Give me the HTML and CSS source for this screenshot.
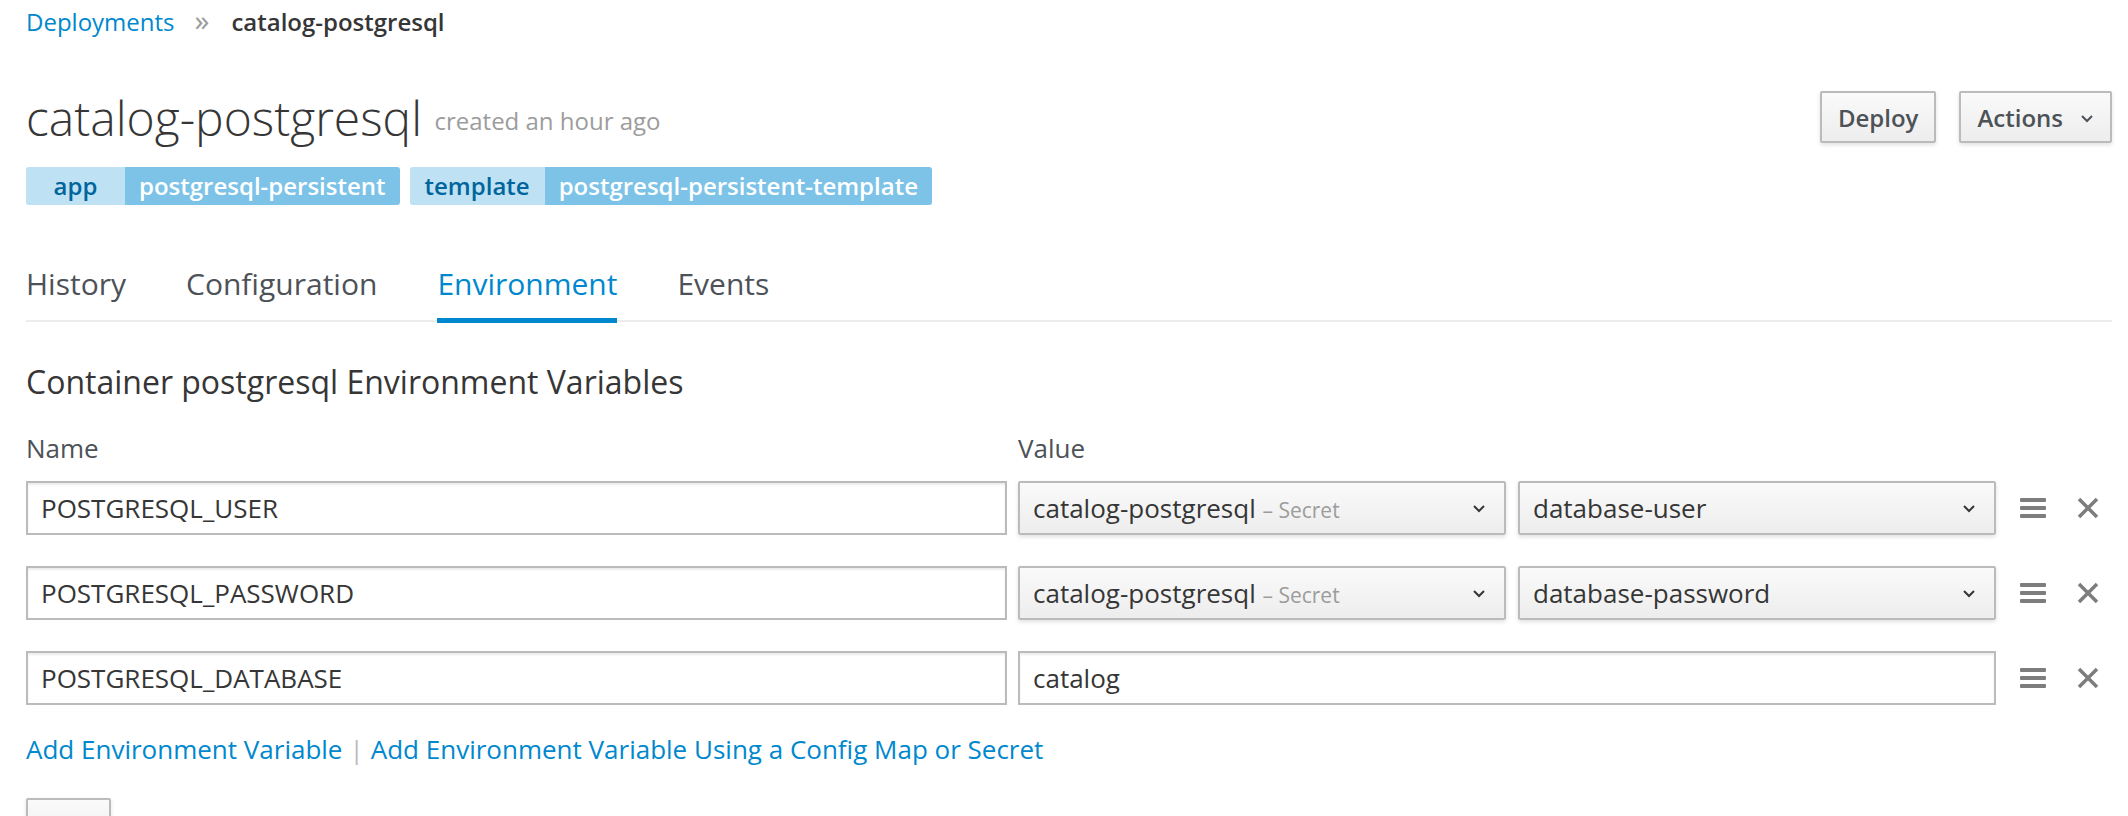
FILE: index.html
```html
<!DOCTYPE html>
<html lang="en">
<head>
<meta charset="utf-8">
<title>catalog-postgresql</title>
<link rel="stylesheet" href="styles.css">
</head>
<body>
<div class="page">
  <nav class="breadcrumb">
    <a class="crumb-link" href="#">Deployments</a>
    <span class="crumb-sep">&raquo;</span>
    <span class="crumb-current">catalog-postgresql</span>
  </nav>

  <header class="header">
    <h1 class="title">catalog-postgresql <small class="title-meta">created an hour ago</small></h1>
    <div class="actions">
      <button class="btn">Deploy</button>
      <button class="btn btn-actions">Actions
        <svg class="caret" width="14" height="9" viewBox="0 0 14 9"><path d="M2 2 L7 7 L12 2" fill="none" stroke="#4d5258" stroke-width="2"/></svg>
      </button>
    </div>
  </header>

  <div class="labels">
    <span class="label"><span class="label-key key-app">app</span><span class="label-value">postgresql-persistent</span></span>
    <span class="label"><span class="label-key">template</span><span class="label-value">postgresql-persistent-template</span></span>
  </div>

  <ul class="tabs">
    <li class="tab">History</li>
    <li class="tab">Configuration</li>
    <li class="tab active">Environment</li>
    <li class="tab">Events</li>
  </ul>

  <h3 class="section-title">Container postgresql Environment Variables</h3>

  <div class="env-grid">
    <div class="col-label">Name</div>
    <div class="col-label">Value</div>
    <div></div>

    <div class="input">POSTGRESQL_USER</div>
    <div class="value-pair">
      <div class="select"><span>catalog-postgresql <span class="muted">– Secret</span></span><svg class="chev" width="14" height="9" viewBox="0 0 14 9"><path d="M2 2 L7 7 L12 2" fill="none" stroke="#363636" stroke-width="2"/></svg></div>
      <div class="select"><span>database-user</span><svg class="chev" width="14" height="9" viewBox="0 0 14 9"><path d="M2 2 L7 7 L12 2" fill="none" stroke="#363636" stroke-width="2"/></svg></div>
    </div>
    <div class="row-icons">
      <svg width="26" height="22" viewBox="0 0 26 22"><rect x="0" y="1" width="26" height="4" rx="1" fill="#7d7d7d"/><rect x="0" y="9" width="26" height="4" rx="1" fill="#7d7d7d"/><rect x="0" y="17" width="26" height="4" rx="1" fill="#7d7d7d"/></svg>
      <svg width="22" height="22" viewBox="0 0 22 22"><path d="M2 2 L20 20 M20 2 L2 20" stroke="#7d7d7d" stroke-width="3.5"/></svg>
    </div>

    <div class="input">POSTGRESQL_PASSWORD</div>
    <div class="value-pair">
      <div class="select"><span>catalog-postgresql <span class="muted">– Secret</span></span><svg class="chev" width="14" height="9" viewBox="0 0 14 9"><path d="M2 2 L7 7 L12 2" fill="none" stroke="#363636" stroke-width="2"/></svg></div>
      <div class="select"><span>database-password</span><svg class="chev" width="14" height="9" viewBox="0 0 14 9"><path d="M2 2 L7 7 L12 2" fill="none" stroke="#363636" stroke-width="2"/></svg></div>
    </div>
    <div class="row-icons">
      <svg width="26" height="22" viewBox="0 0 26 22"><rect x="0" y="1" width="26" height="4" rx="1" fill="#7d7d7d"/><rect x="0" y="9" width="26" height="4" rx="1" fill="#7d7d7d"/><rect x="0" y="17" width="26" height="4" rx="1" fill="#7d7d7d"/></svg>
      <svg width="22" height="22" viewBox="0 0 22 22"><path d="M2 2 L20 20 M20 2 L2 20" stroke="#7d7d7d" stroke-width="3.5"/></svg>
    </div>

    <div class="input">POSTGRESQL_DATABASE</div>
    <div class="input">catalog</div>
    <div class="row-icons">
      <svg width="26" height="22" viewBox="0 0 26 22"><rect x="0" y="1" width="26" height="4" rx="1" fill="#7d7d7d"/><rect x="0" y="9" width="26" height="4" rx="1" fill="#7d7d7d"/><rect x="0" y="17" width="26" height="4" rx="1" fill="#7d7d7d"/></svg>
      <svg width="22" height="22" viewBox="0 0 22 22"><path d="M2 2 L20 20 M20 2 L2 20" stroke="#7d7d7d" stroke-width="3.5"/></svg>
    </div>
  </div>

  <div class="add-links">
    <a href="#">Add Environment Variable</a>
    <span class="pipe">|</span>
    <a href="#">Add Environment Variable Using a Config Map or Secret</a>
  </div>

  <div class="footer-btns">
    <button class="btn btn-save" aria-label="Save"></button>
  </div>
</div>
</body>
</html>
```

FILE: styles.css
```css
* { box-sizing: border-box; }

html, body {
  margin: 0;
  padding: 0;
  background: #fff;
  overflow: hidden;
}

body {
  font-family: "Open Sans", "Noto Sans", sans-serif;
  color: #363636;
  font-size: 24px;
}

.page {
  padding: 0 16px 0 26px;
}

a { color: #0088ce; text-decoration: none; }

.breadcrumb {
  padding-top: 3px;
  line-height: 34px;
  height: 37px;
  font-size: 24px;
  display: flex;
  align-items: baseline;
}
.crumb-sep { color: #9c9c9c; margin: 0 22px 0 20px; font-size: 30px; line-height: 34px; }
.crumb-current { font-weight: 600; }

.header {
  display: flex;
  justify-content: space-between;
  align-items: flex-start;
  margin-top: 54px;
}
.title {
  margin: -2px 0 0;
  font-size: 48px;
  font-weight: 300;
  line-height: 58px;
  letter-spacing: 0;
}
.title-meta {
  font-size: 24px;
  line-height: 1;
  color: #9c9c9c;
  font-weight: 400;
  vertical-align: 6px;
}

.actions {
  display: flex;
  gap: 23px;
}
.btn {
  font-family: "Open Sans", "Noto Sans", sans-serif;
  font-size: 24px;
  font-weight: 600;
  color: #4d5258;
  height: 52px;
  padding: 0 16px;
  border: 2px solid #bbb;
  border-radius: 2px;
  background: linear-gradient(to bottom, #fafafa 0%, #ededed 100%);
  box-shadow: 0 2px 4px rgba(3, 3, 3, 0.12);
  display: inline-flex;
  align-items: center;
  gap: 14px;
}
.btn-actions { gap: 17px; }
.caret { margin-top: 2px; }

.labels {
  display: flex;
  gap: 10px;
  margin-top: 20px;
}
.label {
  display: inline-flex;
  height: 38px;
  border-radius: 3px;
  overflow: hidden;
  font-size: 24px;
  font-weight: 600;
  line-height: 38px;
}
.label-key {
  background: #bee1f4;
  color: #00659c;
  padding: 0 15px;
  text-align: center;
}
.key-app { min-width: 99px; }
.label-value {
  background: #7dc3e8;
  color: #fff;
  padding: 0 14px;
}

.tabs {
  list-style: none;
  margin: 40px 0 0;
  padding: 0;
  display: flex;
  gap: 60px;
  border-bottom: 2px solid #ececec;
}
.tab {
  position: relative;
  font-size: 30px;
  line-height: 40px;
  padding: 19px 0 16px;
  color: #4d5258;
}
.tab.active { color: #0088ce; }
.tab.active::after {
  content: "";
  position: absolute;
  left: 0;
  right: 0;
  bottom: -3px;
  height: 5px;
  background: #0088ce;
}

.section-title {
  margin: 38px 0 0;
  font-size: 32px;
  font-weight: 400;
  line-height: 44px;
}

.env-grid {
  display: grid;
  grid-template-columns: 981px 978px 1fr;
  column-gap: 11px;
  row-gap: 31px;
  margin-top: 27px;
}
.col-label {
  font-size: 26px;
  line-height: 34px;
  color: #4d5258;
  margin-bottom: -15px;
}

.input {
  height: 54px;
  border: 2px solid #bbb;
  box-shadow: inset 0 2px 2px rgba(0, 0, 0, 0.075);
  padding: 0 13px;
  display: flex;
  align-items: center;
  font-size: 26px;
  color: #363636;
  background: #fff;
}

.value-pair {
  display: grid;
  grid-template-columns: 488px 1fr;
  column-gap: 12px;
}
.select {
  height: 54px;
  border: 2px solid #bbb;
  border-radius: 2px;
  background: linear-gradient(to bottom, #fafafa 0%, #ededed 100%);
  box-shadow: 0 2px 4px rgba(3, 3, 3, 0.12);
  padding: 0 18px 0 13px;
  display: flex;
  align-items: center;
  justify-content: space-between;
  font-size: 26px;
  color: #363636;
}
.muted { color: #9c9c9c; font-size: 21px; }

.row-icons {
  display: flex;
  align-items: center;
  gap: 31px;
  padding-left: 13px;
}

.add-links {
  margin-top: 26px;
  font-size: 26px;
  line-height: 36px;
  display: flex;
  align-items: center;
}
.pipe { color: #bbb; margin: 0 7px 0 7px; }

.footer-btns {
  margin-top: 31px;
}
.btn-save {
  width: 85px;
  font-weight: 400;
}
```
